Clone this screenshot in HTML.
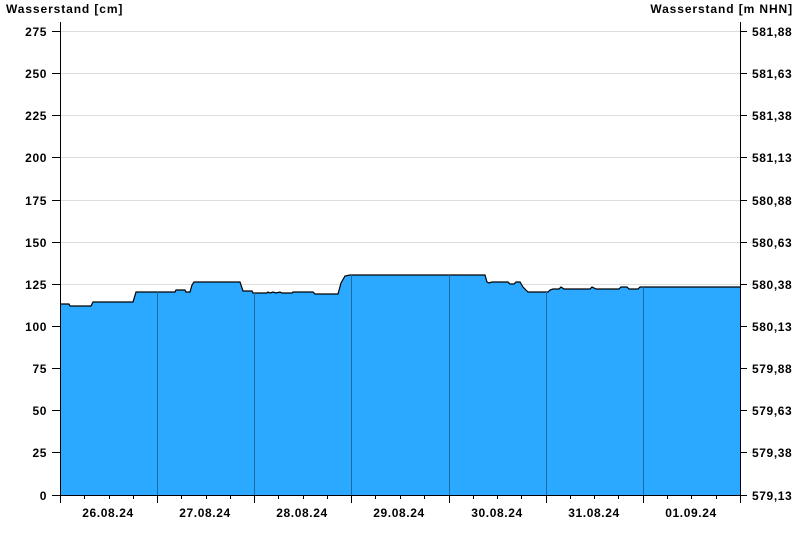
<!DOCTYPE html>
<html><head><meta charset="utf-8"><style>
body{margin:0;background:#fff;width:800px;height:550px;overflow:hidden}
text{font-family:"Liberation Sans",Arial,sans-serif;font-weight:bold;font-size:12px;fill:#000;letter-spacing:0.6px}
</style></head><body>
<svg width="800" height="550" xmlns="http://www.w3.org/2000/svg">
<text x="6" y="13" style="letter-spacing:0.9px">Wasserstand [cm]</text>
<text x="793" y="13" text-anchor="end" style="letter-spacing:0.9px">Wasserstand [m NHN]</text>
<g stroke="#dddddd" stroke-width="1">
<line x1="60" x2="740" y1="31.5" y2="31.5"/><line x1="60" x2="740" y1="73.5" y2="73.5"/>
<line x1="60" x2="740" y1="115.5" y2="115.5"/><line x1="60" x2="740" y1="157.5" y2="157.5"/>
<line x1="60" x2="740" y1="200.5" y2="200.5"/><line x1="60" x2="740" y1="242.5" y2="242.5"/>
<line x1="60" x2="740" y1="284.5" y2="284.5"/><line x1="60" x2="740" y1="326.5" y2="326.5"/>
<line x1="60" x2="740" y1="368.5" y2="368.5"/><line x1="60" x2="740" y1="410.5" y2="410.5"/>
<line x1="60" x2="740" y1="452.5" y2="452.5"/>
</g>
<path fill="#2ba8ff" stroke="none" d="M60,495 L60,304 L69,304 L70,306 L91,306 L93,302 L133,302 L136,292 L175,292 L176,290 L185,290 L186,292 L190,292 L192,285 L194,282 L240,282 L243,291 L252,291 L253,293 L267,293 L268,292 L270,293 L273,292 L276,293 L280,292 L282,293 L292,293 L293,292 L313,292 L315,294 L338,294 L341,283 L345,276 L350,275 L485,275 L487,282 L489,283 L492,282 L508,282 L510,284 L514,284 L516,282 L520,282 L523,287 L528,292 L548,292 L550,290 L553,289 L559,289 L561,287 L564,289 L590,289 L592,287 L596,289 L619,289 L621,287 L627,287 L629,289 L638,289 L640,287 L740,287 L740,495 Z"/>
<path fill="none" stroke="#000" stroke-width="1.2" d="M60,304 L69,304 L70,306 L91,306 L93,302 L133,302 L136,292 L175,292 L176,290 L185,290 L186,292 L190,292 L192,285 L194,282 L240,282 L243,291 L252,291 L253,293 L267,293 L268,292 L270,293 L273,292 L276,293 L280,292 L282,293 L292,293 L293,292 L313,292 L315,294 L338,294 L341,283 L345,276 L350,275 L485,275 L487,282 L489,283 L492,282 L508,282 L510,284 L514,284 L516,282 L520,282 L523,287 L528,292 L548,292 L550,290 L553,289 L559,289 L561,287 L564,289 L590,289 L592,287 L596,289 L619,289 L621,287 L627,287 L629,289 L638,289 L640,287 L740,287"/>
<g stroke="#1c6aa0" stroke-width="1">
<line x1="157.5" x2="157.5" y1="292" y2="495"/><line x1="254.5" x2="254.5" y1="293" y2="495"/>
<line x1="351.5" x2="351.5" y1="275" y2="495"/><line x1="449.5" x2="449.5" y1="275" y2="495"/>
<line x1="546.5" x2="546.5" y1="292" y2="495"/><line x1="643.5" x2="643.5" y1="287" y2="495"/>
</g>
<g stroke="#000" stroke-width="1">
<line x1="60.5" x2="60.5" y1="22" y2="503"/>
<line x1="740.5" x2="740.5" y1="22" y2="495"/>
<line x1="52" x2="740" y1="495.5" y2="495.5"/>
<line x1="52" x2="60" y1="31.5" y2="31.5"/><line x1="52" x2="60" y1="73.5" y2="73.5"/>
<line x1="52" x2="60" y1="115.5" y2="115.5"/><line x1="52" x2="60" y1="157.5" y2="157.5"/>
<line x1="52" x2="60" y1="200.5" y2="200.5"/><line x1="52" x2="60" y1="242.5" y2="242.5"/>
<line x1="52" x2="60" y1="284.5" y2="284.5"/><line x1="52" x2="60" y1="326.5" y2="326.5"/>
<line x1="52" x2="60" y1="368.5" y2="368.5"/><line x1="52" x2="60" y1="410.5" y2="410.5"/>
<line x1="52" x2="60" y1="452.5" y2="452.5"/>
<line x1="740" x2="747" y1="31.5" y2="31.5"/><line x1="740" x2="747" y1="73.5" y2="73.5"/>
<line x1="740" x2="747" y1="115.5" y2="115.5"/><line x1="740" x2="747" y1="157.5" y2="157.5"/>
<line x1="740" x2="747" y1="200.5" y2="200.5"/><line x1="740" x2="747" y1="242.5" y2="242.5"/>
<line x1="740" x2="747" y1="284.5" y2="284.5"/><line x1="740" x2="747" y1="326.5" y2="326.5"/>
<line x1="740" x2="747" y1="368.5" y2="368.5"/><line x1="740" x2="747" y1="410.5" y2="410.5"/>
<line x1="740" x2="747" y1="452.5" y2="452.5"/><line x1="740" x2="747" y1="495.5" y2="495.5"/>
<line x1="157.5" x2="157.5" y1="495" y2="503"/><line x1="254.5" x2="254.5" y1="495" y2="503"/>
<line x1="351.5" x2="351.5" y1="495" y2="503"/><line x1="449.5" x2="449.5" y1="495" y2="503"/>
<line x1="546.5" x2="546.5" y1="495" y2="503"/><line x1="643.5" x2="643.5" y1="495" y2="503"/>
<line x1="740.5" x2="740.5" y1="495" y2="503"/>
<line x1="84.5" x2="84.5" y1="495" y2="499"/><line x1="109.5" x2="109.5" y1="495" y2="499"/><line x1="133.5" x2="133.5" y1="495" y2="499"/>
<line x1="181.5" x2="181.5" y1="495" y2="499"/><line x1="206.5" x2="206.5" y1="495" y2="499"/><line x1="230.5" x2="230.5" y1="495" y2="499"/>
<line x1="278.5" x2="278.5" y1="495" y2="499"/><line x1="303.5" x2="303.5" y1="495" y2="499"/><line x1="327.5" x2="327.5" y1="495" y2="499"/>
<line x1="375.5" x2="375.5" y1="495" y2="499"/><line x1="400.5" x2="400.5" y1="495" y2="499"/><line x1="424.5" x2="424.5" y1="495" y2="499"/>
<line x1="473.5" x2="473.5" y1="495" y2="499"/><line x1="497.5" x2="497.5" y1="495" y2="499"/><line x1="521.5" x2="521.5" y1="495" y2="499"/>
<line x1="570.5" x2="570.5" y1="495" y2="499"/><line x1="594.5" x2="594.5" y1="495" y2="499"/><line x1="618.5" x2="618.5" y1="495" y2="499"/>
<line x1="667.5" x2="667.5" y1="495" y2="499"/><line x1="691.5" x2="691.5" y1="495" y2="499"/><line x1="716.5" x2="716.5" y1="495" y2="499"/>
</g>
<g text-anchor="end">
<text x="47" y="36">275</text><text x="47" y="78">250</text><text x="47" y="120">225</text>
<text x="47" y="162">200</text><text x="47" y="205">175</text><text x="47" y="247">150</text>
<text x="47" y="289">125</text><text x="47" y="331">100</text><text x="47" y="373">75</text>
<text x="47" y="415">50</text><text x="47" y="457">25</text><text x="47" y="500">0</text>
</g>
<g>
<text x="752" y="36">581,88</text><text x="752" y="78">581,63</text><text x="752" y="120">581,38</text>
<text x="752" y="162">581,13</text><text x="752" y="205">580,88</text><text x="752" y="247">580,63</text>
<text x="752" y="289">580,38</text><text x="752" y="331">580,13</text><text x="752" y="373">579,88</text>
<text x="752" y="415">579,63</text><text x="752" y="457">579,38</text><text x="752" y="500">579,13</text>
</g>
<g text-anchor="middle">
<text x="108" y="517">26.08.24</text><text x="205" y="517">27.08.24</text><text x="302" y="517">28.08.24</text>
<text x="399" y="517">29.08.24</text><text x="497" y="517">30.08.24</text><text x="594" y="517">31.08.24</text>
<text x="691" y="517">01.09.24</text>
</g>
</svg>
</body></html>
